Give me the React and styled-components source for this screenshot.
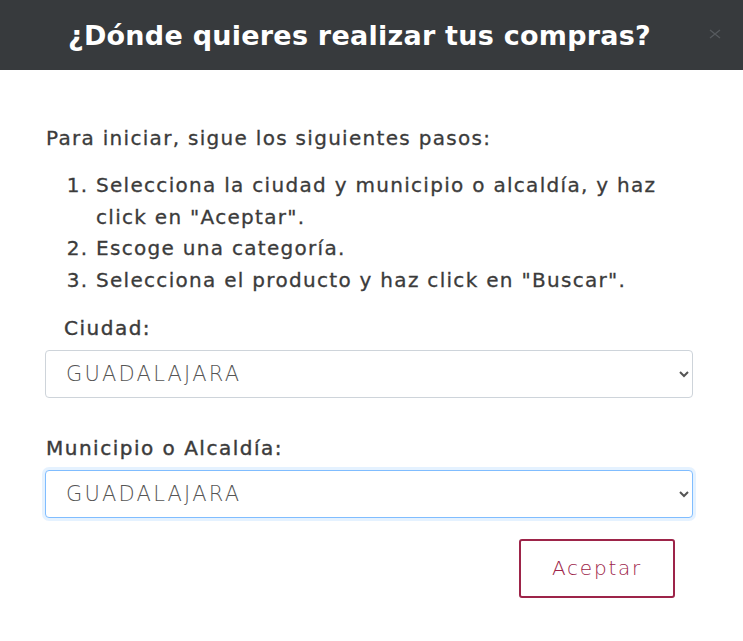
import React from 'react';
import styled, { createGlobalStyle } from 'styled-components';

const GlobalStyle = createGlobalStyle`
    html, body {
        margin: 0;
        padding: 0;
        background: #ffffff;
    }
    body {
        font-family: "DejaVu Sans", "Open Sans", sans-serif;
        color: #3b3b3b;
    }
`;

const Modal = styled('div')`
    width: 743px;
    min-height: 641px;
    background: #ffffff;
`;

const Header = styled('header')`
    position: relative;
    height: 70px;
    background: #373a3d;
    display: flex;
    align-items: center;
    justify-content: center;
`;

const Title = styled('h1')`
    margin: 0 0 0 -24px;
    color: #ffffff;
    font-size: 27px;
    font-weight: 700;
    letter-spacing: 0.25px;
`;

const CloseButton = styled('button')`
    position: absolute;
    right: 20px;
    top: 27px;
    width: 16px;
    height: 14px;
    padding: 0;
    border: 0;
    background: transparent;
    color: #565a5e;
    display: flex;
    align-items: center;
    justify-content: center;
`;

const Body = styled('div')`
    padding: 56px 50px 0 45px;
`;

const Text = styled('p')`
    margin: 0 0 20px 1px;
    font-size: 20px;
    line-height: 24px;
    letter-spacing: 1.3px;
    -webkit-text-stroke: 0.3px #3b3b3b;
`;

const Steps = styled('ol')`
    margin: 0 0 18px;
    padding-left: 51px;
    font-size: 20px;
    line-height: 31.7px;
    letter-spacing: 1.3px;
    -webkit-text-stroke: 0.3px #3b3b3b;
`;

const Field = styled('div')`
    margin-bottom: ${(p) => p.$gap}px;
`;

const Label = styled('label')`
    display: block;
    margin: 0 0 9px ${(p) => p.$indent}px;
    font-size: 20px;
    line-height: 26px;
    letter-spacing: 1.5px;
    -webkit-text-stroke: 0.4px #3b3b3b;
`;

const Select = styled('select')`
    display: block;
    width: 648px;
    height: 48px;
    padding: 0 10px 0 16px;
    border: 1px solid ${(p) => (p.$focused ? '#80bdff' : '#ced4da')};
    border-radius: 4px;
    background: #ffffff;
    color: #555555;
    font-family: "DejaVu Sans", sans-serif;
    font-size: 21px;
    font-weight: 300;
    letter-spacing: 2.2px;
    box-shadow: ${(p) => (p.$focused ? '0 0 0 3px rgba(0, 123, 255, 0.1)' : 'none')};
    outline: none;
`;

const Actions = styled('div')`
    display: flex;
    justify-content: flex-end;
    padding-right: 18px;
    margin-top: 21px;
`;

const AcceptButton = styled('button')`
    width: 156px;
    height: 59px;
    border: 2px solid #9d2449;
    border-radius: 3px;
    background: #ffffff;
    color: #9d2449;
    font-family: "DejaVu Sans", sans-serif;
    font-size: 20px;
    font-weight: 300;
    letter-spacing: 1.8px;
`;

const App = () => {
    return (
        <Modal>
            <GlobalStyle />
            <Header>
                <Title>¿Dónde quieres realizar tus compras?</Title>
                <CloseButton aria-label="Cerrar">
                    <svg width="12" height="10" viewBox="0 0 12 10">
                        <path d="M1 1 L11 9 M11 1 L1 9" stroke="currentColor" strokeWidth="1.3" fill="none" />
                    </svg>
                </CloseButton>
            </Header>
            <Body>
                <Text>Para iniciar, sigue los siguientes pasos:</Text>
                <Steps>
                    <li>Selecciona la ciudad y municipio o alcaldía, y haz click en "Aceptar".</li>
                    <li>Escoge una categoría.</li>
                    <li>Selecciona el producto y haz click en "Buscar".</li>
                </Steps>
                <Field $gap={37}>
                    <Label $indent={19}>Ciudad:</Label>
                    <Select defaultValue="GUADALAJARA">
                        <option>GUADALAJARA</option>
                    </Select>
                </Field>
                <Field $gap={0}>
                    <Label $indent={1}>Municipio o Alcaldía:</Label>
                    <Select $focused defaultValue="GUADALAJARA">
                        <option>GUADALAJARA</option>
                    </Select>
                </Field>
                <Actions>
                    <AcceptButton>Aceptar</AcceptButton>
                </Actions>
            </Body>
        </Modal>
    );
};

export default App;
